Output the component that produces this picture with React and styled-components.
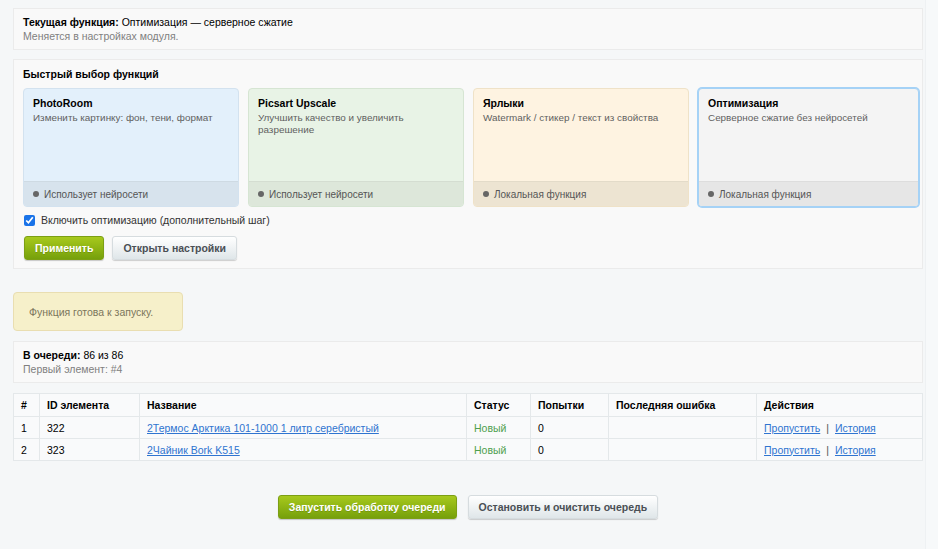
import React, { useState } from 'react';
import styled, { createGlobalStyle, css } from 'styled-components';

const GlobalStyle = createGlobalStyle`
  html, body {
    margin: 0;
    padding: 0;
    background: #f5f7f8;
    font-family: "Liberation Sans", Arial, sans-serif;
    font-size: 10.5px;
    color: #000;
  }
`;

const Page = styled.div`
  display: flex;
  min-height: 549px;
`;

const Content = styled.div`
  width: 910px;
  padding: 8px 0 30px 13px;
  display: flex;
  flex-direction: column;
`;

const Gutter = styled.div`
  flex: 1;
  margin-left: 2px;
  border-left: 1px solid #eef1f3;
  background: #f7f9fa;
`;

const Panel = styled.div`
  background: #f9f9f9;
  border: 1px solid #ebebeb;
  padding: ${({ pad }) => pad || '6px 9px'};
  margin-bottom: ${({ mb }) => mb || 0}px;
`;

const Line = styled.div`
  line-height: 14px;
  color: ${({ muted }) => (muted ? '#808080' : '#000')};
`;

const Strong = styled.b`
  font-weight: bold;
`;

const SectionTitle = styled.div`
  font-weight: bold;
  line-height: 14px;
  margin: 0 0 7px;
`;

const Cards = styled.div`
  display: grid;
  grid-template-columns: 216px 216px 216px 221px;
  gap: 9px;
`;

const palette = {
  blue: { bg: '#e3f0fb', foot: '#d7e3ed', border: '#d3e2ef' },
  green: { bg: '#e8f3e6', foot: '#dde7da', border: '#d6e5d3' },
  yellow: { bg: '#fef3e1', foot: '#ede4d2', border: '#efe2c8' },
  gray: { bg: '#f4f4f4', foot: '#e6e6e6', border: '#e2e2e2' },
};

const Card = styled.div`
  height: 119px;
  display: flex;
  flex-direction: column;
  border-radius: 4px;
  overflow: hidden;
  background: ${({ tone }) => palette[tone].bg};
  border: 1px solid ${({ tone }) => palette[tone].border};
  box-sizing: border-box;
  cursor: pointer;
  ${({ active }) =>
    active &&
    css`
      border-color: #a5d2f6;
      box-shadow: 0 0 0 1px #a5d2f6;
    `}
`;

const CardBody = styled.div`
  flex: 1;
  padding: 7px 9px;
`;

const CardTitle = styled.div`
  font-weight: bold;
  line-height: 14px;
  margin-bottom: 2px;
`;

const CardDesc = styled.div`
  color: #5f5f5f;
  font-size: 9.9px;
  line-height: 12px;
`;

const CardFoot = styled.div`
  height: 24px;
  display: flex;
  align-items: center;
  gap: 5px;
  padding: 0 9px;
  font-size: 10px;
  color: #555;
  background: ${({ tone }) => palette[tone].foot};
  border-top: 1px solid rgba(0, 0, 0, 0.04);
`;

const Dot = styled.span`
  width: 6px;
  height: 6px;
  border-radius: 50%;
  background: #666;
`;

const CheckRow = styled.label`
  display: flex;
  align-items: center;
  gap: 3px;
  margin: 6px 0 9px;
  line-height: 14px;
  color: #333;
`;

const Check = styled.input`
  margin: 0 3px 0 1px;
  width: 11px;
  height: 11px;
  accent-color: #1a73e8;
`;

const Buttons = styled.div`
  display: flex;
  gap: ${({ center }) => (center ? 11 : 8)}px;
  justify-content: ${({ center }) => (center ? 'center' : 'flex-start')};
  padding-left: ${({ center }) => (center ? 0 : 1)}px;
`;

const Button = styled.button`
  height: 24px;
  padding: 0 10px;
  border-radius: 3px;
  font-family: inherit;
  font-size: 10.5px;
  font-weight: bold;
  cursor: pointer;
  ${({ primary }) =>
    primary
      ? css`
          color: #fff;
          border: 1px solid #7c9f14;
          background: linear-gradient(#a7c91d, #76a00b);
          text-shadow: 0 1px 0 rgba(0, 0, 0, 0.15);
          box-shadow: 0 1px 1px rgba(0, 0, 0, 0.2);
        `
      : css`
          color: #4a4f55;
          border: 1px solid #d6dcdf;
          background: linear-gradient(#ffffff, #dfe6e9);
          box-shadow: 0 1px 1px rgba(0, 0, 0, 0.18);
        `}
`;

const Note = styled.div`
  align-self: flex-start;
  width: 170px;
  height: 39px;
  box-sizing: border-box;
  margin: 23px 0 10px;
  padding: 0 15px;
  display: flex;
  align-items: center;
  background: #f6f0ca;
  border: 1px solid #e9deb1;
  border-radius: 4px;
  color: #7b765c;
`;

const Table = styled.table`
  border-collapse: collapse;
  width: 100%;
  background: #f9fafb;
  margin-top: 10px;
  th, td {
    border: 1px solid #e4e8ea;
    text-align: left;
    padding: 0 7px;
    height: 21px;
    line-height: 14px;
  }
  th {
    font-weight: bold;
    height: 22px;
  }
`;

const Status = styled.span`
  color: #4f9f4f;
`;

const Link = styled.a`
  color: #2f74d0;
  text-decoration: underline;
  cursor: pointer;
`;

const Sep = styled.span`
  color: #555;
  margin: 0 6px;
`;

const Footer = styled.div`
  margin-top: 34px;
`;

const cards = [
  { tone: 'blue', title: 'PhotoRoom', desc: 'Изменить картинку: фон, тени, формат', foot: 'Использует нейросети' },
  { tone: 'green', title: 'Picsart Upscale', desc: 'Улучшить качество и увеличить разрешение', foot: 'Использует нейросети' },
  { tone: 'yellow', title: 'Ярлыки', desc: 'Watermark / стикер / текст из свойства', foot: 'Локальная функция' },
  { tone: 'gray', title: 'Оптимизация', desc: 'Серверное сжатие без нейросетей', foot: 'Локальная функция' },
];

const rows = [
  { n: 1, id: 322, name: '2Термос Арктика 101-1000 1 литр серебристый' },
  { n: 2, id: 323, name: '2Чайник Bork K515' },
];

const App = () => {
  const [active, setActive] = useState(3);
  const [enabled, setEnabled] = useState(true);

  return (
    <>
      <GlobalStyle />
      <Page>
        <Content>
          <Panel mb={9}>
            <Line>
              <Strong>Текущая функция:</Strong> Оптимизация — серверное сжатие
            </Line>
            <Line muted>Меняется в настройках модуля.</Line>
          </Panel>

          <Panel pad="7px 4px 8px 9px">
            <SectionTitle>Быстрый выбор функций</SectionTitle>
            <Cards>
              {cards.map((c, i) => (
                <Card key={c.title} tone={c.tone} active={active === i} onClick={() => setActive(i)}>
                  <CardBody>
                    <CardTitle>{c.title}</CardTitle>
                    <CardDesc>{c.desc}</CardDesc>
                  </CardBody>
                  <CardFoot tone={c.tone}>
                    <Dot />
                    {c.foot}
                  </CardFoot>
                </Card>
              ))}
            </Cards>
            <CheckRow>
              <Check type="checkbox" checked={enabled} onChange={(e) => setEnabled(e.target.checked)} />
              Включить оптимизацию (дополнительный шаг)
            </CheckRow>
            <Buttons>
              <Button primary>Применить</Button>
              <Button>Открыть настройки</Button>
            </Buttons>
          </Panel>

          <Note>Функция готова к запуску.</Note>

          <Panel>
            <Line>
              <Strong>В очереди:</Strong> 86 из 86
            </Line>
            <Line muted>Первый элемент: #4</Line>
          </Panel>

          <Table>
            <colgroup>
              <col style={{ width: 26 }} />
              <col style={{ width: 100 }} />
              <col style={{ width: 327 }} />
              <col style={{ width: 64 }} />
              <col style={{ width: 78 }} />
              <col style={{ width: 148 }} />
              <col />
            </colgroup>
            <thead>
              <tr>
                <th>#</th>
                <th>ID элемента</th>
                <th>Название</th>
                <th>Статус</th>
                <th>Попытки</th>
                <th>Последняя ошибка</th>
                <th>Действия</th>
              </tr>
            </thead>
            <tbody>
              {rows.map((r) => (
                <tr key={r.id}>
                  <td>{r.n}</td>
                  <td>{r.id}</td>
                  <td>
                    <Link>{r.name}</Link>
                  </td>
                  <td>
                    <Status>Новый</Status>
                  </td>
                  <td>0</td>
                  <td></td>
                  <td>
                    <Link>Пропустить</Link>
                    <Sep>|</Sep>
                    <Link>История</Link>
                  </td>
                </tr>
              ))}
            </tbody>
          </Table>

          <Footer>
            <Buttons center>
              <Button primary>Запустить обработку очереди</Button>
              <Button>Остановить и очистить очередь</Button>
            </Buttons>
          </Footer>
        </Content>
        <Gutter />
      </Page>
    </>
  );
};

export default App;
